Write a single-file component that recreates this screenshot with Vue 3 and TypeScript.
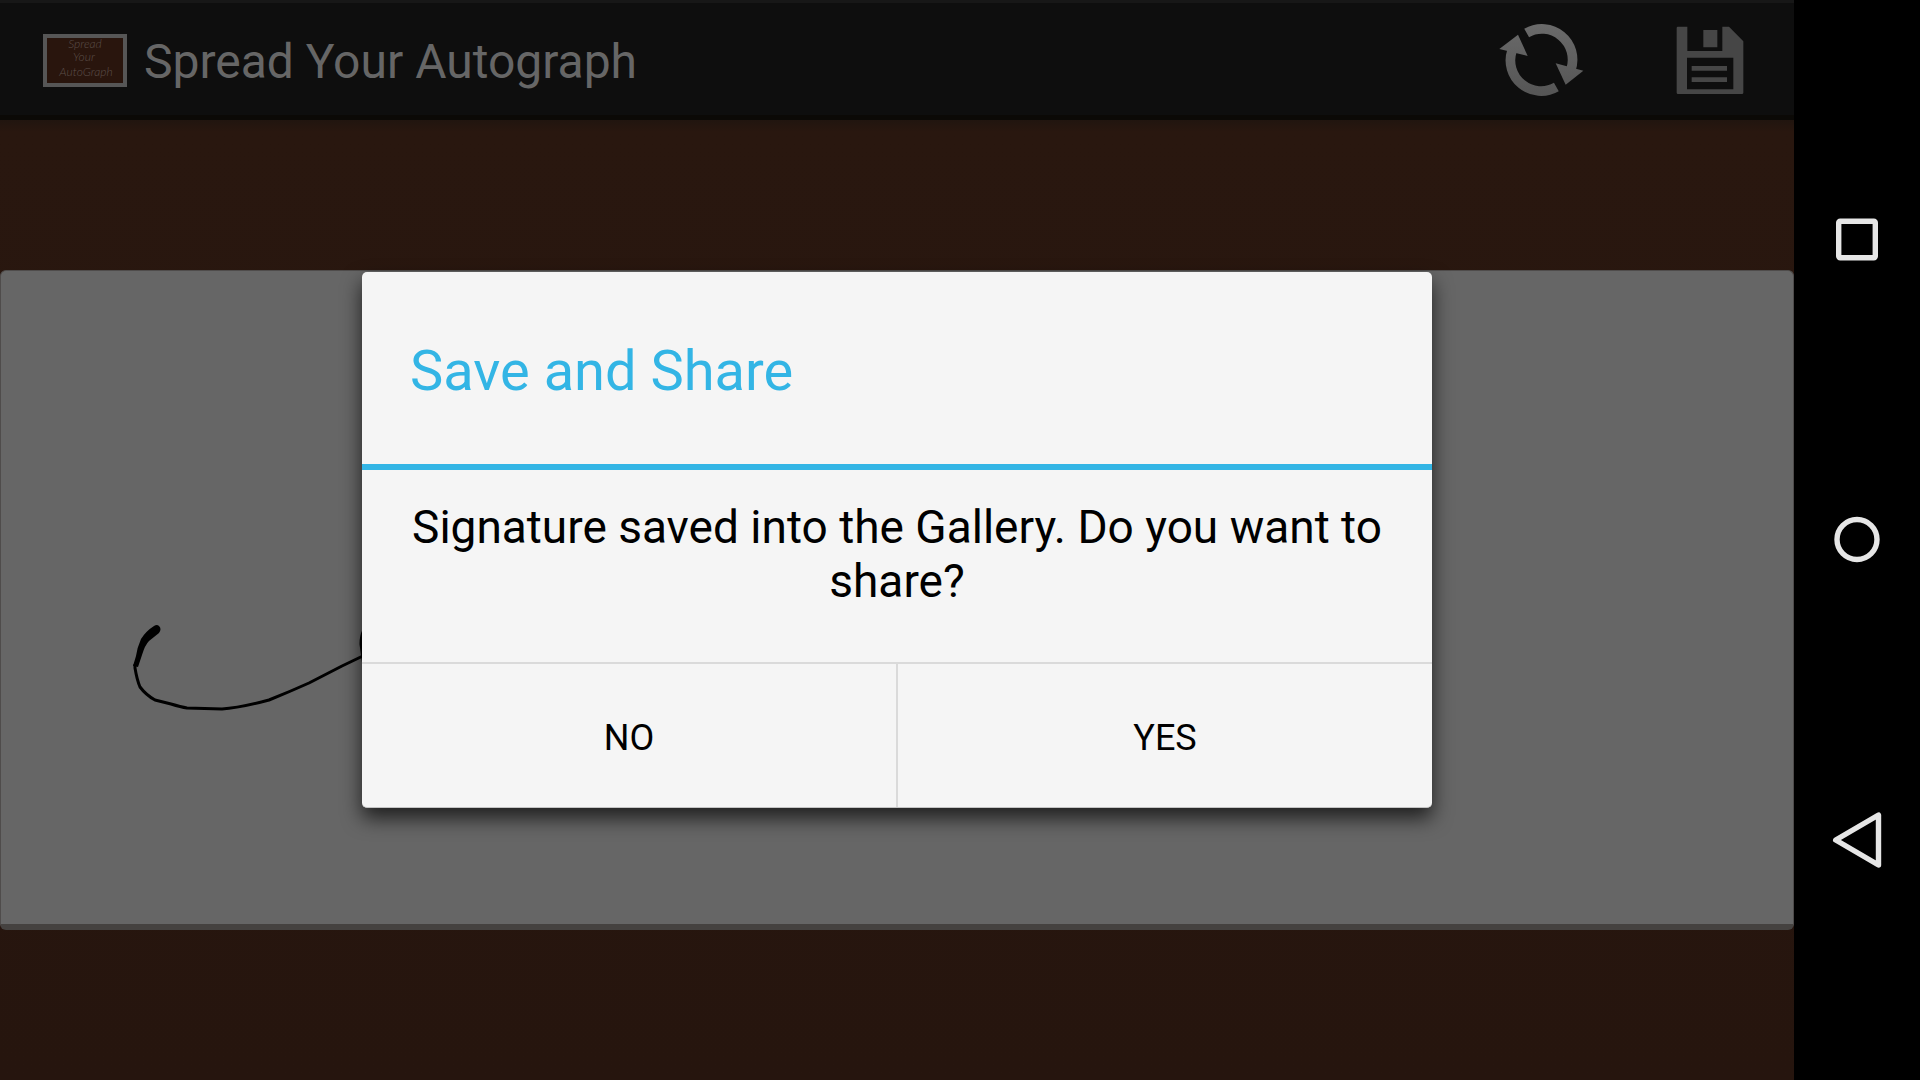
<script setup lang="ts">
import { ref } from 'vue'

interface Choice {
  id: string
  label: string
}

const choices: Choice[] = [
  { id: 'no', label: 'NO' },
  { id: 'yes', label: 'YES' },
]

const answer = ref<string | null>(null)
</script>

<template>
  <div class="device">
    <div class="app">
      <header class="bar">
        <svg class="logo" viewBox="0 0 84 53" aria-hidden="true">
          <rect class="logo-board" x="2" y="2" width="80" height="49" />
          <text class="logo-text" x="42" y="14">Spread</text>
          <text class="logo-text" x="41" y="27">Your</text>
          <text class="logo-text" x="43" y="42">AutoGraph</text>
        </svg>
        <h1 class="bar-title">Spread Your Autograph</h1>
        <button class="action" type="button" aria-label="Reset">
          <svg width="88" height="74" viewBox="54 69 264 222">
            <defs>
              <linearGradient id="metal" x1="0" y1="72" x2="0" y2="288" gradientUnits="userSpaceOnUse">
                <stop offset="0" stop-color="#6a6a6a" />
                <stop offset="1" stop-color="#555555" />
              </linearGradient>
            </defs>
            <g fill="none" stroke="url(#metal)" stroke-width="29">
              <path d="M140 99A92 92 0 0 1 273 208" />
              <path d="M229 261A92 92 0 0 1 96 152" />
            </g>
            <path fill="url(#metal)" d="M227 190L310 212L257 254Z" />
            <path fill="url(#metal)" d="M143 168L58 147L114 104Z" />
          </svg>
        </button>
        <button class="action" type="button" aria-label="Save">
          <svg width="70" height="70" viewBox="585 75 210 210">
            <path
              fill="#464646"
              fill-rule="evenodd"
              d="M594 80H622V153H727V80H747L790 124V278Q790 282 786 282H594Q590 282 590 278V84Q590 80 594 80ZM621 173V268H760V173Z"
            />
            <path fill="#464646" d="M670 90H712V142H670ZM635 198H741V212H635ZM635 232H741V246H635Z" />
          </svg>
        </button>
      </header>

      <main class="board">
        <section class="sheet" aria-label="Signature">
          <svg class="ink" width="100%" height="100%">
            <path
              class="blob"
              d="M153 355Q145 360 140 368Q136 377 135 385L132 395L137 396L141 384Q144 374 148 370L158 362Q161 358 158 355Q156 353 153 355Z"
            />
            <path
              class="stroke"
              d="M134 393V397Q136 409 139 416Q145 424 154 429L170 433Q180 436 186 437L221 438Q238 437 268 429Q288 421 308 412L341 395L366 383"
            />
            <path class="stroke" d="M363 359Q360 365 360 373L363 395" />
          </svg>
        </section>
      </main>

      <div class="overlay">
        <div class="dialog" role="alertdialog" aria-labelledby="dlg-title" aria-describedby="dlg-text">
          <h2 id="dlg-title" class="dialog-title">Save and Share</h2>
          <p id="dlg-text" class="dialog-text">Signature saved into the Gallery. Do you want to share?</p>
          <div class="choices">
            <button v-for="c in choices" :key="c.id" class="choice" type="button" @click="answer = c.id">
              {{ c.label }}
            </button>
          </div>
        </div>
      </div>
    </div>

    <nav class="system" aria-label="System">
      <button class="key" type="button" aria-label="Recent apps">
        <svg width="60" height="60" viewBox="0 0 60 60">
          <rect x="11.7" y="11.2" width="36.6" height="36.6" rx="1.5" />
        </svg>
      </button>
      <button class="key" type="button" aria-label="Home">
        <svg width="60" height="60" viewBox="0 0 60 60">
          <circle cx="30" cy="29.5" r="20" />
        </svg>
      </button>
      <button class="key" type="button" aria-label="Back">
        <svg width="60" height="60" viewBox="0 0 60 60">
          <path d="M51.5 5V55L8.7 30Z" />
        </svg>
      </button>
    </nav>
  </div>
</template>

<style>
body {
  margin: 0;
  background: #000;
}
</style>

<style scoped>
.device {
  display: flex;
  min-height: 100vh;
  background: #000;
  font-family: Roboto, 'Liberation Sans', sans-serif;
}

button {
  margin: 0;
  padding: 0;
  border: 0;
  background: none;
  font: inherit;
  cursor: pointer;
}

.app {
  position: relative;
  display: flex;
  flex: 1;
  flex-direction: column;
  min-width: 0;
}

.bar {
  box-sizing: border-box;
  display: flex;
  align-items: center;
  height: 120px;
  padding: 2px 0 0 43px;
  border-top: 3px solid #171717;
  border-bottom: 5px solid #0b0906;
  background: #0e0e0e;
}

.logo {
  flex: none;
  width: 84px;
  height: 53px;
}

.logo-board {
  fill: #29150d;
  stroke: #565656;
  stroke-width: 4;
}

.logo-text {
  fill: #5c4f4a;
  font-family: Lato, sans-serif;
  font-size: 12px;
  font-style: italic;
  font-weight: 300;
  text-anchor: middle;
}

.bar-title {
  flex: 1;
  margin: 0 0 0 17px;
  padding-top: 4px;
  color: #666;
  font-size: 48px;
  font-weight: 400;
  line-height: 56px;
}

.action {
  display: flex;
  align-items: center;
  justify-content: center;
  width: 168px;
  height: 110px;
}

.board {
  display: flex;
  flex: 1;
  padding: 150px 0;
  background: linear-gradient(#21150f, #29170f 12px, #26150e);
}

.sheet {
  box-sizing: border-box;
  flex: 1;
  border: 1px solid #4f4c4b;
  border-bottom: 6px solid #454240;
  border-radius: 6px;
  background: #666;
}

.ink {
  display: block;
}

.blob {
  fill: #000;
}

.stroke {
  fill: none;
  stroke: #000;
  stroke-width: 3;
  stroke-linejoin: round;
}

.overlay {
  position: absolute;
  inset: 0;
  display: flex;
  align-items: center;
  justify-content: center;
}

.dialog {
  box-sizing: border-box;
  width: 1070px;
  max-width: 90%;
  border-bottom: 1px solid #c4c4c4;
  border-radius: 5px;
  background: #f5f5f5;
  box-shadow: 0 10px 20px rgba(0, 0, 0, 0.7);
}

.dialog-title {
  margin: 0;
  padding: 65px 48px 59px;
  border-bottom: 6px solid #33b5e5;
  color: #33b5e5;
  font-size: 56px;
  font-weight: 400;
  line-height: 68px;
}

.dialog-text {
  margin: 0;
  padding: 30px 48px 54px;
  color: #000;
  font-size: 46px;
  line-height: 54px;
  text-align: center;
}

.choices {
  display: flex;
  border-top: 2px solid #dadada;
}

.choice {
  flex: 1;
  height: 143px;
  padding-top: 4px;
  color: #000;
  font-size: 36px;
}

.choice + .choice {
  border-left: 2px solid #dadada;
}

.system {
  display: flex;
  flex: none;
  flex-direction: column;
  justify-content: center;
  width: 126px;
}

.key {
  display: flex;
  align-items: center;
  justify-content: center;
  height: 300px;
}

.key svg {
  fill: none;
  stroke: #e6e6e6;
  stroke-width: 5.4;
  stroke-linejoin: round;
}
</style>
